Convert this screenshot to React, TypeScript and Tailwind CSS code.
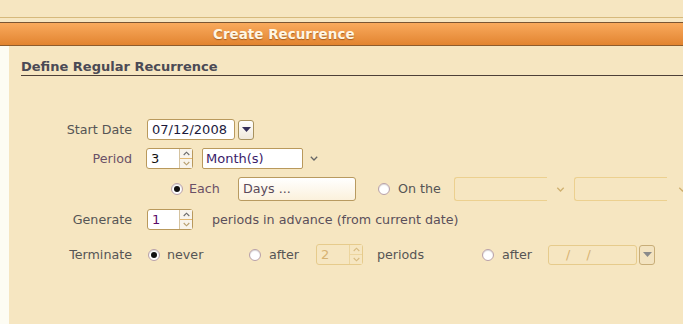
import React from "react";

const Chev = ({ dir, color, w = 8, h = 5 }: { dir: "up" | "down"; color: string; w?: number; h?: number }) => (
  <svg width={w} height={h} viewBox="0 0 8 5" className="block">
    {dir === "down" ? (
      <path d="M0.8 0.8 L4 4 L7.2 0.8" fill="none" stroke={color} strokeWidth="1.3" />
    ) : (
      <path d="M0.8 4.2 L4 1 L7.2 4.2" fill="none" stroke={color} strokeWidth="1.3" />
    )}
  </svg>
);

const Spinner = ({ value, disabled, textColor, w }: { value: string; disabled?: boolean; textColor: string; w: string }) => (
  <div
    className={`${w} h-[21px] shrink-0 flex rounded-[3px] border ${
      disabled ? "border-[#e6cb8c] bg-[#f6e6c1]" : "border-[#b9995c] bg-white"
    }`}
  >
    <div className={`flex-1 pl-[4px] leading-[19px] text-[13px]`} style={{ color: textColor }}>
      {value}
    </div>
    <div
      className={`w-[13px] flex flex-col border-l ${
        disabled ? "border-[#ecd59e] bg-[#f6e6c1]" : "border-[#d5c3a0] bg-[#f8f4ec]"
      }`}
    >
      <div className={`flex-1 flex items-center justify-center border-b ${disabled ? "border-[#ecd59e]" : "border-[#e2b870]"}`}>
        <Chev dir="up" color={disabled ? "#d8bb80" : "#6a6a6a"} w={7} h={5} />
      </div>
      <div className="flex-1 flex items-center justify-center">
        <Chev dir="down" color={disabled ? "#d8bb80" : "#b8a070"} w={7} h={5} />
      </div>
    </div>
  </div>
);

const Radio = ({ checked }: { checked?: boolean }) => (
  <div className="w-[12px] h-[12px] shrink-0 rounded-full border border-[#b8a0a8] bg-white flex items-center justify-center shadow-[inset_0_1px_1px_rgba(0,0,0,0.15)]">
    {checked && <div className="w-[6px] h-[6px] rounded-full bg-[#111]" />}
  </div>
);

const DropBtn = ({ disabled }: { disabled?: boolean }) => (
  <div
    className={`w-[16px] h-[20px] shrink-0 rounded-[3px] border flex items-center justify-center ${
      disabled ? "border-[#c8ad78] bg-[#f3e3c0]" : "border-[#a8925e] bg-gradient-to-b from-white to-[#efe8da]"
    }`}
  >
    <svg width="9" height="5" viewBox="0 0 9 5">
      <path d="M0 0 L9 0 L4.5 5 Z" fill={disabled ? "#8a8a8a" : "#35305a"} />
    </svg>
  </div>
);

const Label = ({ children, color = "#555555" }: { children: React.ReactNode; color?: string }) => (
  <div className="w-[123px] shrink-0 text-right" style={{ color }}>
    {children}
  </div>
);

export default function App() {
  return (
    <div className="w-[683px] h-[324px] overflow-hidden bg-[#f6e6c1] font-['DejaVu_Sans',sans-serif] text-[12.7px] flex flex-col">
      <div className="h-[17px] shrink-0" />
      <div className="h-px shrink-0 bg-[#d6b97c]" />
      <div className="h-[4px] shrink-0" />
      <div className="h-[24px] shrink-0 border-t border-b border-t-[#7a5532] border-b-[#8e5c2c] bg-gradient-to-b from-[#f9aa5c] to-[#e2842f] flex items-center">
        <div className="pl-[213px] text-[13.5px] font-bold text-[#fff6e4] [text-shadow:0_1px_1px_rgba(120,60,10,0.6)] leading-[22px]">
          Create Recurrence
        </div>
      </div>
      <div className="flex flex-1">
        <div className="w-[9px] shrink-0 bg-[#fdfcf3]" />
        <div className="flex-1 flex flex-col">
          <div className="pt-[13px] pl-[12px]">
            <div className="h-[17px] leading-[16px] border-b border-[#4d4038] text-[13px] font-bold text-[#4b4a55]">
              Define Regular Recurrence
            </div>
          </div>
          <div className="pt-[43px] flex flex-col">
            {/* Row 1 */}
            <div className="flex items-center h-[21px]">
              <Label>Start Date</Label>
              <div className="ml-[15px] w-[88px] h-[21px] shrink-0 rounded-[3px] border border-[#b9995c] bg-white pl-[4px] leading-[19px] text-[13px] text-[#1c1a3c]">
                07/12/2008
              </div>
              <div className="ml-[3px]">
                <DropBtn />
              </div>
            </div>
            {/* Row 2 */}
            <div className="flex items-center h-[21px] mt-[8px]">
              <Label color="#6a5066">Period</Label>
              <div className="ml-[14px]">
                <Spinner value="3" textColor="#111" w="w-[47px]" />
              </div>
              <div className="ml-[9px] w-[101px] h-[21px] shrink-0 rounded-[2px] border border-[#b9995c] bg-white pl-[3px] leading-[19px] text-[13px] text-[#3a1c6a]">
                Month(s)
              </div>
              <div className="ml-[7px]">
                <Chev dir="down" color="#666" w={8} h={5} />
              </div>
            </div>
            {/* Row 3 */}
            <div className="flex items-center h-[24px] mt-[8px]">
              <div className="ml-[162px]">
                <Radio checked />
              </div>
              <div className="ml-[6px] w-[49px] shrink-0 text-[#6a5066]">Each</div>
              <div className="w-[118px] h-[24px] shrink-0 rounded-[3px] border border-[#b89a60] bg-gradient-to-b from-white to-[#fbf1dc] pl-[4px] leading-[22px] text-[#5a4a5a]">
                Days ...
              </div>
              <div className="ml-[22px]">
                <Radio />
              </div>
              <div className="ml-[8px] w-[56px] shrink-0 text-[#555]">On the</div>
              <div className="w-[93px] h-[24px] shrink-0 rounded-l-[3px] border border-r-0 border-[#ecd08f]" />
              <div className="ml-[9px] w-[9px] shrink-0">
                <Chev dir="down" color="#cfb070" w={9} h={5} />
              </div>
              <div className="ml-[9px] w-[93px] h-[24px] shrink-0 rounded-l-[3px] border border-r-0 border-[#ecd08f]" />
              <div className="ml-[11px] w-[9px] shrink-0">
                <Chev dir="down" color="#cfb070" w={9} h={5} />
              </div>
            </div>
            {/* Row 4 */}
            <div className="flex items-center h-[21px] mt-[8px]">
              <Label>Generate</Label>
              <div className="ml-[15px]">
                <Spinner value="1" textColor="#5a0a6a" w="w-[46px]" />
              </div>
              <div className="ml-[19px] whitespace-nowrap text-[#5a4f5a]">periods in advance (from current date)</div>
            </div>
            {/* Row 5 */}
            <div className="flex items-center h-[21px] mt-[14px]">
              <Label>Terminate</Label>
              <div className="ml-[16px]">
                <Radio checked />
              </div>
              <div className="ml-[7px] w-[82px] shrink-0 text-[#555]">never</div>
              <Radio />
              <div className="ml-[8px] w-[47px] shrink-0 text-[#555]">after</div>
              <Spinner value="2" disabled textColor="#d6b272" w="w-[47px]" />
              <div className="ml-[14px] w-[105px] shrink-0 text-[#555]">periods</div>
              <Radio />
              <div className="ml-[8px] w-[46px] shrink-0 text-[#555]">after</div>
              <div className="w-[89px] h-[20px] shrink-0 rounded-[3px] border border-[#e6cb8c] pl-[17px] leading-[18px] text-[#d6b272] whitespace-pre">
                {"/    /"}
              </div>
              <div className="ml-[2px]">
                <DropBtn disabled />
              </div>
            </div>
          </div>
        </div>
      </div>
    </div>
  );
}
